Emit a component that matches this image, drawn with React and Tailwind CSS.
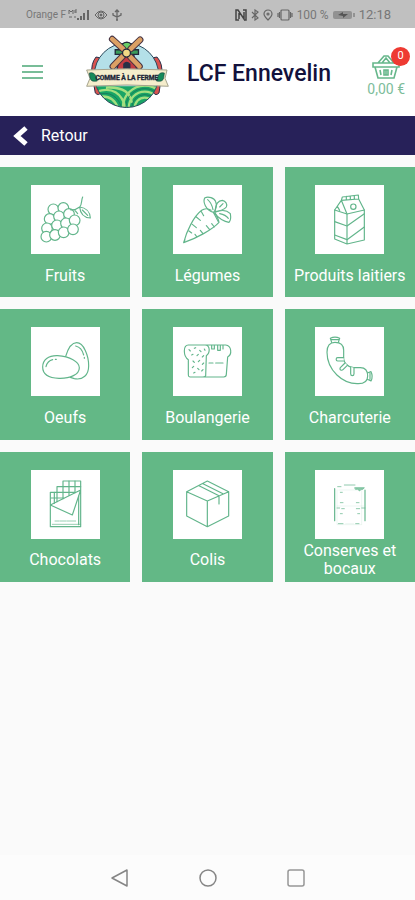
import React from "react";

function Grapes() {
  const berries = [
    [67, 73], [97, 69], [56, 102], [84, 94], [114, 87], [48, 130], [78, 121],
    [105, 115], [131, 106], [46, 155], [72, 150], [98, 142], [126, 133],
  ];
  return (
    <>
      {berries.map(([x, y]) => (
        <circle key={x + "-" + y} cx={x} cy={y} r="16" fill="#fff" />
      ))}
      <path d="M118 74C128 76 138 72 146 66C154 58 150 46 155 36M146 66C148 88 162 98 178 99C177 80 164 68 146 66ZM154 75L170 91M130 74L140 86" />
    </>
  );
}

function Carrot() {
  return (
    <>
      <path d="M32 173C40 140 62 94 86 76C94 70 106 70 114 76M32 173C70 160 118 134 138 112C136 100 130 90 122 82M32 173L36 164M84 78L92 92M70 96L82 106M58 118L70 128M48 138L56 144M110 134L100 122M90 146L82 136M72 156L66 148M124 126L116 116" />
      <path d="M122 82C98 76 88 50 96 38C106 34 124 38 128 50C132 60 130 72 122 82ZM104 44C114 52 118 64 120 74" />
      <path d="M126 78C128 58 136 46 148 46C158 48 164 58 160 66C152 76 140 78 126 80M140 66L150 56" />
      <path d="M126 82C144 74 162 76 172 86C174 98 172 108 168 112C156 110 134 100 126 84ZM140 86C150 88 160 92 166 100" />
      <path d="M122 84C128 94 132 104 136 110" />
    </>
  );
}

function Milk() {
  return (
    <>
      <path d="M59 75L96 87L148 75M59 75V162L96 177L148 165V75M96 87V177" />
      <path d="M59 75L79 46L96 87M79 46L131 42L148 75M79 46L82 36L130 30L131 42M94 34V44M106 33V43M118 32V42M67 64L74 76" />
      <circle cx="115" cy="65" r="8" />
      <path d="M59 110L96 123L148 86M59 150L96 164L148 126" />
    </>
  );
}

function Eggs() {
  return (
    <>
      <path d="M104 88C112 62 124 47 137 47C158 47 173 86 173 116C173 144 156 160 130 155L118 151" />
      <path d="M35 120C35 98 52 85 80 86C116 88 145 104 145 122C145 142 118 155 84 154C54 153 35 142 35 120ZM45 119C48 107 56 100 65 98M73 97H76M134 57C147 60 155 72 158 84M160 91V94" />
    </>
  );
}

function Bread() {
  return (
    <>
      <path d="M46 54H96C112 54 112 78 100 86L98 146C96 150 94 150 88 150H52C46 150 46 148 46 142V98C30 88 30 54 46 54ZM96 54H158C176 56 178 82 164 90L160 142C160 148 158 150 152 150H90M116 54V66H124V56M134 54V70H142V56M150 56V66M108 108H120M128 108H150" />
      <path d="M48 68L52 72M64 64L68 62M80 70L84 74M94 66L96 70M56 84L60 82M72 86L76 82M88 90L92 86M60 102L64 106M76 104L80 100M88 112L92 108M58 122L62 118M74 124L78 128M86 132L90 128M62 138L66 136" />
    </>
  );
}

function Sausage() {
  return (
    <>
      <path d="M50 46L46 34C54 30 66 30 74 34L70 46M50 38L70 38" />
      <path d="M60 46C44 46 36 58 36 76C36 130 84 172 130 170C148 170 158 162 158 147C158 132 150 122 136 122H116C96 120 84 106 86 86V70C86 54 76 46 60 46Z" />
      <path d="M157 138L168 134C172 142 172 154 168 162L157 157M165 139V157" />
      <path fill="#fff" d="M86 92H68C62 92 62 102 68 102H86M90 108L76 122C72 128 80 132 84 128L97 115M107 120V140C107 148 117 148 117 140V122" />
    </>
  );
}

function Chocolate() {
  return (
    <>
      <path d="M58 105V170H149V33H96V50H78V67H58V105L149 60L124 135L58 105" />
      <path d="M60 84H98M78 67V95M78 67H132M96 50V86M96 50H149M114 33V76M132 33V68M70 67V100M143 78V164" />
      <path strokeWidth="2" d="M72 153H84M87 153H104M107 153H134M64 163H149" />
    </>
  );
}

function Parcel() {
  return (
    <path d="M103 33L167 65V138L103 170L41 138V65ZM41 65L103 93L167 65M103 93V170M78 47L138 77V102M90 41L150 71" />
  );
}

function Jar() {
  return (
    <>
      <path d="M59 56V152M150 60V152" />
      <path strokeWidth="3" opacity="0.7" d="M88 45H120M68 50H78M76 67H82M76 98H84M124 98H132M66 114H74M80 116H88M124 116H134M140 114H150M76 131H82M128 131H134M70 161H84M122 161H132" />
      <path strokeWidth="2" fill="#8ccbab" d="M120 53H148L144 58H138L134 63L128 58H122Z" />
      <path strokeWidth="1" opacity="0.35" d="M72 60H140V164H66V60M66 108H146M92 161H116" />
    </>
  );
}

const categories = [
  { label: "Fruits", Icon: Grapes },
  { label: "Légumes", Icon: Carrot },
  { label: "Produits laitiers", Icon: Milk },
  { label: "Oeufs", Icon: Eggs },
  { label: "Boulangerie", Icon: Bread },
  { label: "Charcuterie", Icon: Sausage },
  { label: "Chocolats", Icon: Chocolate },
  { label: "Colis", Icon: Parcel },
  { label: "Conserves et bocaux", Icon: Jar },
];

function Logo() {
  return (
    <svg viewBox="48 22 250 222" className="h-[74px] w-[83px] shrink-0" role="img" aria-label="Comme à la ferme">
      <defs>
        <clipPath id="disc">
          <circle cx="170" cy="143" r="97" />
        </clipPath>
      </defs>
      <path d="M78 88Q62 108 66 140L76 196Q86 206 92 196L90 90Z" fill="#d9534f" stroke="#26304a" strokeWidth="3" />
      <path d="M262 88Q280 108 276 140L268 196Q258 206 252 196L250 90Z" fill="#d9534f" stroke="#26304a" strokeWidth="3" />
      <circle cx="170" cy="143" r="97" fill="#b4e0e8" />
      <g clipPath="url(#disc)" fill="none">
        <path d="M60 176H290V250H60Z" fill="#19a566" />
        <g stroke="#a4df80" strokeWidth="7">
          <circle cx="225" cy="240" r="66" />
          <circle cx="225" cy="240" r="48" />
          <circle cx="225" cy="240" r="30" />
          <path d="M80 192Q150 170 168 244M78 210Q130 196 146 246M108 180Q180 176 186 226" />
        </g>
        <g stroke="#1c6b57" strokeWidth="2">
          <circle cx="225" cy="240" r="57" />
          <circle cx="225" cy="240" r="39" />
          <path d="M80 201Q140 184 157 246" />
        </g>
      </g>
      <circle cx="170" cy="143" r="97" fill="none" stroke="#2a4a5c" strokeWidth="3" />
      <path d="M150 82H192L202 132H140Z" fill="#c43c43" stroke="#222a3c" strokeWidth="4" />
      <path d="M160 108Q170 96 182 108V132H160Z" fill="#283047" />
      <path d="M136 66H206V80H136Z" fill="#3a9d5b" stroke="#222a3c" strokeWidth="4" />
      <path d="M152 66Q154 44 171 43Q188 44 190 66Z" fill="#69cf67" stroke="#222a3c" strokeWidth="4" />
      <g strokeLinecap="round">
        <path d="M127 34L160 64M211 36L182 64M129 116L158 86M209 116L182 88" stroke="#463343" strokeWidth="20" />
        <path d="M127 34L160 64M211 36L182 64M129 116L158 86M209 116L182 88" stroke="#dca064" strokeWidth="14" />
      </g>
      <circle cx="170" cy="76" r="12" fill="#f1d985" stroke="#222a3c" strokeWidth="4" />
      <path d="M50 127Q170 120 292 127L286 152L296 176Q170 168 50 176L60 152Z" fill="#f5edcc" stroke="#a4a28c" strokeWidth="3" />
      <path d="M58 136Q74 132 78 148L82 160Q62 164 60 150ZM284 136Q268 132 264 148L260 160Q280 164 282 150Z" fill="#158a5b" stroke="#164b42" strokeWidth="2" />
      <text x="171" y="158" textAnchor="middle" fontFamily="Liberation Sans Narrow, Roboto, sans-serif" fontWeight="700" fontSize="20" fill="#202638" stroke="#202638">
        COMME À LA FERME
      </text>
    </svg>
  );
}

function StatusBar() {
  return (
    <div className="flex h-7 items-center justify-between bg-[#c0c0c0] pt-[2px] pr-6 pl-[26px] text-[#777]">
      <div className="flex items-center gap-1">
        <div className="flex items-center gap-[2px]">
          <span className="text-[10px] leading-4">Orange F</span>
          <svg viewBox="0 0 22 14" className="h-[14px] w-[22px]" fill="none" stroke="#666" strokeWidth="1">
            <path d="M1 6V2L3 4L5 2V6M7 5V2H9M7 4H9M1 9H4M6 9H8" />
            <path d="M10 12V10M13 12V8M16 12V5M20 12V2" strokeWidth="2" />
          </svg>
        </div>
        <svg viewBox="0 0 14 12" className="h-3 w-[14px]" fill="none" stroke="#666">
          <path d="M1 6Q7 -2 13 6Q7 14 1 6Z" />
          <circle cx="7" cy="6" r="3" />
          <circle cx="7" cy="6" r="1" fill="#555" />
        </svg>
        <svg viewBox="0 0 10 12" className="h-3 w-[10px]" fill="none" stroke="#666" strokeWidth="1.3">
          <path d="M5 1V11M3 3L5 1L7 3M1 4V6L5 8L9 6V4M4 11H6" />
        </svg>
      </div>
      <div className="flex items-center gap-1">
        <svg viewBox="0 0 12 12" className="h-3 w-3" fill="none" stroke="#444" strokeWidth="1.5">
          <path d="M4 11H1V1H3L9 10V3M8 1H11V11H9M4 10V4" />
        </svg>
        <svg viewBox="0 0 8 12" className="h-3 w-2" fill="none" stroke="#666" strokeWidth="1.2">
          <path d="M1 3L7 9L4 11V1L7 3L1 9" />
        </svg>
        <svg viewBox="0 0 10 12" className="h-3 w-[10px]" fill="none" stroke="#666" strokeWidth="1.2">
          <path d="M5 11Q1 7 1 5A4 4 0 0 1 9 5Q9 7 5 11Z" />
          <circle cx="5" cy="5" r="1" />
        </svg>
        <svg viewBox="0 0 16 12" className="h-3 w-4" fill="none" stroke="#666" strokeWidth="1.2">
          <rect x="4" y="1" width="8" height="10" rx="1" />
          <path d="M1 4V8M2.500 3V9M15 4V8M13.500 3V9" />
        </svg>
        <span className="text-xs leading-4">100 %</span>
        <svg viewBox="0 0 22 10" className="h-[10px] w-[22px]">
          <rect x="0" y="1" width="19" height="8" rx="2" fill="#929292" />
          <rect x="20" y="3" width="2" height="4" fill="#929292" />
          <path d="M5 5L10 2V4H15L10 8V6Z" fill="#555" />
        </svg>
        <span className="text-[13px] leading-4">12:18</span>
      </div>
    </div>
  );
}

function Header() {
  return (
    <header className="flex h-[88px] items-center bg-white pr-[10px] pl-[22px]">
      <button type="button" aria-label="Menu" className="mr-[43px] flex w-[21px] flex-col gap-1">
        <span className="h-[2px] bg-[#78bd98]" />
        <span className="h-[2px] bg-[#78bd98]" />
        <span className="h-[2px] bg-[#78bd98]" />
      </button>
      <Logo />
      <h1 className="ml-[18px] flex-1 pt-1 text-[23px] leading-8 font-medium whitespace-nowrap text-[#12113c]">LCF Ennevelin</h1>
      <button type="button" aria-label="Panier" className="relative flex flex-col items-center gap-[2px] pt-2">
        <svg viewBox="0 0 30 24" className="h-6 w-[30px]" fill="none" stroke="#66b78b" strokeWidth="1.600">
          <path d="M2 8H28V12H2ZM4 12L7 23H23L26 12M7 8L13 1H17L23 8M11 8L15 3L19 8" />
          <path d="M9 15L10 20M21 15L20 20M13 15H17V20H13ZM15 15V20" />
        </svg>
        <span className="text-sm leading-4 text-[#7dbd9b]">0,00 €</span>
        <span className="absolute top-0 -right-[5px] flex size-[19px] items-center justify-center rounded-full bg-[#ee3a32] text-[11px] text-white">
          0
        </span>
      </button>
    </header>
  );
}

function Tile({ label, Icon }) {
  return (
    <button type="button" className="flex aspect-square flex-col items-center bg-[#63b886] pt-[18px] text-white">
      <span className="block w-[69px] shrink-0 bg-white">
        <svg viewBox="0 0 207 207" className="block size-[69px]" fill="none" stroke="#62b58b" strokeWidth="3.500" strokeLinejoin="round" strokeLinecap="round">
          <Icon />
        </svg>
      </span>
      <span className="flex flex-1 items-center px-2 text-center text-base leading-[18px]">{label}</span>
    </button>
  );
}

export default function App() {
  return (
    <div className="flex min-h-screen flex-col bg-[#fafafa] font-[Roboto,sans-serif]">
      <StatusBar />
      <Header />
      <button type="button" className="flex h-[39px] items-center gap-3 bg-[#272159] pl-[13px] text-base text-white">
        <svg viewBox="0 0 16 20" className="h-5 w-4" fill="none" stroke="#fff" strokeWidth="5">
          <path d="M13 2L4 10L13 18" />
        </svg>
        Retour
      </button>
      <main className="grid grid-cols-3 gap-3 pt-3">
        {categories.map(({ label, Icon }) => (
          <Tile key={label} label={label} Icon={Icon} />
        ))}
      </main>
      <nav className="mt-auto flex h-[45px] items-center justify-center gap-[70px] bg-[#fcfcfc]">
        <button type="button" aria-label="Précédent">
          <svg viewBox="0 0 18 18" className="block size-[18px]" fill="none" stroke="#858585" strokeWidth="1.500" strokeLinejoin="round">
            <path d="M1 9L16 1V17Z" />
          </svg>
        </button>
        <button type="button" aria-label="Accueil">
          <svg viewBox="0 0 18 18" className="block size-[18px]" fill="none" stroke="#858585" strokeWidth="1.500">
            <circle cx="9" cy="9" r="8" />
          </svg>
        </button>
        <button type="button" aria-label="Applications récentes">
          <svg viewBox="0 0 18 18" className="block size-[18px]" fill="none" stroke="#969696" strokeWidth="1.500">
            <rect x="1" y="1" width="16" height="16" rx="2" />
          </svg>
        </button>
      </nav>
    </div>
  );
}
